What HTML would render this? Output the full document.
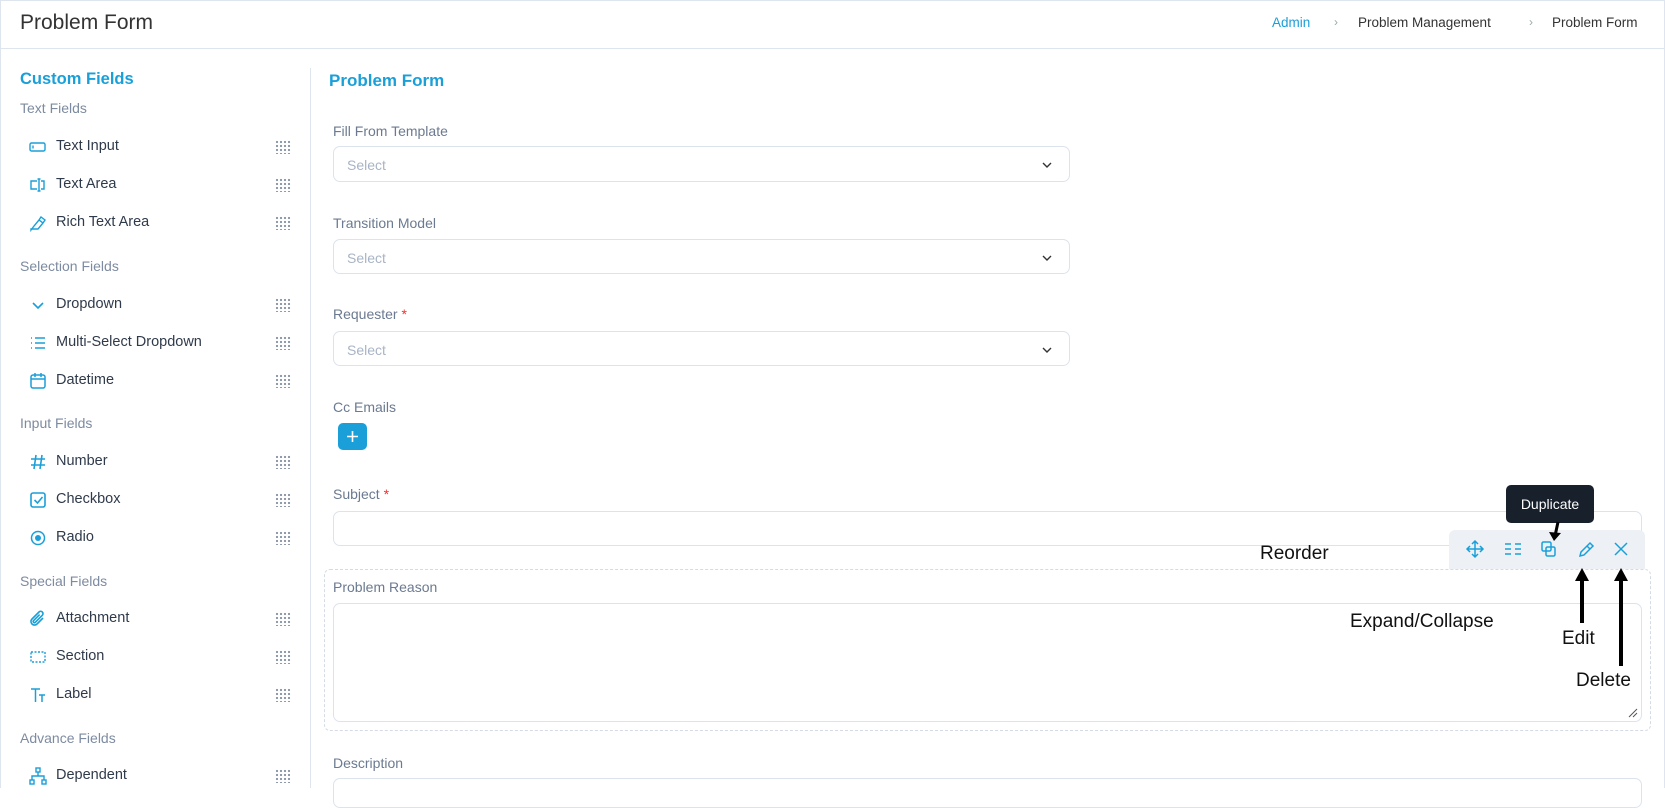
<!DOCTYPE html>
<html><head><meta charset="utf-8"><style>
*{box-sizing:border-box;margin:0;padding:0}
body{width:1665px;height:785px;overflow:hidden;background:#fff;font-family:"Liberation Sans",sans-serif;position:relative;color:#2f3a4a}
.a{position:absolute;white-space:nowrap}
.lbl{font-size:14px;color:#6b7a90}
.sec{font-size:14px;color:#7d8ba0;left:20px}
.item{left:56px;font-size:14.5px;color:#2f3a4a}
.ic{left:28px;width:20px;height:20px}
.grip{left:275px;width:16px;height:14px;background-image:radial-gradient(circle,#8a96a8 1px,transparent 1.3px);background-size:4px 4px}
.box{position:absolute;border:1px solid #dde3ec;border-radius:7px;background:#fff}
.sel{font-size:14px;color:#a8b4c6;padding:10px 13px}
.chev{position:absolute;right:16px;top:12px}
.ann{position:absolute;font-size:19px;color:#111;white-space:nowrap}
.arrow{position:absolute;width:4px;background:#000}
</style></head><body>
<div class="a" style="left:0;top:0;width:1665px;height:49px;border:1px solid #dfe5ee"></div>
<div class="a" style="left:20px;top:11px;font-size:21px;color:#333">Problem Form</div>
<div class="a" style="left:1272px;top:15px;font-size:13.5px;color:#1a9fd9">Admin</div>
<div class="a" style="left:1334px;top:15px;font-size:12px;color:#9aa">›</div>
<div class="a" style="left:1358px;top:15px;font-size:13.5px;color:#333">Problem Management</div>
<div class="a" style="left:1529px;top:15px;font-size:12px;color:#9aa">›</div>
<div class="a" style="left:1552px;top:15px;font-size:13.5px;color:#333">Problem Form</div>
<div class="a" style="left:0;top:48px;width:1px;height:740px;background:#dfe5ee"></div>
<div class="a" style="left:1664px;top:48px;width:1px;height:740px;background:#dfe5ee"></div>
<div class="a" style="left:310px;top:68px;width:1px;height:720px;background:#dfe5ee"></div>

<div class="a" style="left:20px;top:70px;font-size:16.5px;color:#1a9fd9;font-weight:bold">Custom Fields</div>
<div class="a sec" style="top:100px">Text Fields</div>
<div class="a sec" style="top:258px">Selection Fields</div>
<div class="a sec" style="top:415px">Input Fields</div>
<div class="a sec" style="top:573px">Special Fields</div>
<div class="a sec" style="top:730px">Advance Fields</div>

<svg class="a ic" style="top:137px" viewBox="0 0 20 20" fill="none" stroke="#1a9fd9" stroke-width="1.4"><rect x="2" y="6" width="15" height="8" rx="1.5"/><path d="M5 8.5v3"/></svg>
<div class="a item" style="top:138px">Text Input</div><div class="a grip" style="top:140px"></div>
<svg class="a ic" style="top:175px" viewBox="0 0 20 20" fill="none" stroke="#1a9fd9" stroke-width="1.4"><path d="M9 6H3v8h6M13 6h3v8h-3M11 4v12M9.5 4h3M9.5 16h3"/></svg>
<div class="a item" style="top:176px">Text Area</div><div class="a grip" style="top:178px"></div>
<svg class="a ic" style="top:213px" viewBox="0 0 20 20" fill="none" stroke="#1a9fd9" stroke-width="1.4"><path d="M3 17l3-4 5-6 4 3-5 6H3zM11 7l2-3 4 3-2 3"/></svg>
<div class="a item" style="top:214px">Rich Text Area</div><div class="a grip" style="top:216px"></div>

<svg class="a ic" style="top:295px" viewBox="0 0 20 20" fill="none" stroke="#1a9fd9" stroke-width="1.6"><path d="M5 8l5 5 5-5"/></svg>
<div class="a item" style="top:296px">Dropdown</div><div class="a grip" style="top:298px"></div>
<svg class="a ic" style="top:333px" viewBox="0 0 20 20" fill="none" stroke="#1a9fd9" stroke-width="1.6"><path d="M3 5h1M3 10h1M3 15h1M7 5h10M7 10h10M7 15h10"/></svg>
<div class="a item" style="top:334px">Multi-Select Dropdown</div><div class="a grip" style="top:336px"></div>
<svg class="a ic" style="top:371px" viewBox="0 0 20 20" fill="none" stroke="#1a9fd9" stroke-width="1.5"><rect x="3" y="4" width="14" height="13" rx="2"/><path d="M3 8h14M7 2v4M13 2v4"/></svg>
<div class="a item" style="top:372px">Datetime</div><div class="a grip" style="top:374px"></div>

<svg class="a ic" style="top:452px" viewBox="0 0 20 20" fill="none" stroke="#1a9fd9" stroke-width="1.6"><path d="M8 3L6 17M14 3l-2 14M3 7h14M3 13h14"/></svg>
<div class="a item" style="top:453px">Number</div><div class="a grip" style="top:455px"></div>
<svg class="a ic" style="top:490px" viewBox="0 0 20 20" fill="none" stroke="#1a9fd9" stroke-width="1.6"><rect x="3" y="3" width="14" height="14" rx="2"/><path d="M6.5 10l3 3 5-6"/></svg>
<div class="a item" style="top:491px">Checkbox</div><div class="a grip" style="top:493px"></div>
<svg class="a ic" style="top:528px" viewBox="0 0 20 20"><circle cx="10" cy="10" r="6.5" fill="none" stroke="#1a9fd9" stroke-width="1.5"/><circle cx="10" cy="10" r="3" fill="#1a9fd9"/></svg>
<div class="a item" style="top:529px">Radio</div><div class="a grip" style="top:531px"></div>

<svg class="a ic" style="top:609px" viewBox="0 0 20 20" fill="none" stroke="#1a9fd9" stroke-width="1.6"><path d="M15 9l-6 6a3.5 3.5 0 01-5-5l7-7a2.3 2.3 0 013.3 3.3l-7 7a1.2 1.2 0 01-1.7-1.7l6-6"/></svg>
<div class="a item" style="top:610px">Attachment</div><div class="a grip" style="top:612px"></div>
<svg class="a ic" style="top:647px" viewBox="0 0 20 20" fill="none" stroke="#1a9fd9" stroke-width="1.4" stroke-dasharray="2 1.5"><rect x="3" y="5" width="14" height="10"/></svg>
<div class="a item" style="top:648px">Section</div><div class="a grip" style="top:650px"></div>
<svg class="a ic" style="top:685px" viewBox="0 0 20 20" fill="none" stroke="#1a9fd9" stroke-width="1.5"><path d="M3 4h9M7.5 4v13M11 10h6M14 10v7"/></svg>
<div class="a item" style="top:686px">Label</div><div class="a grip" style="top:688px"></div>
<svg class="a ic" style="top:766px" viewBox="0 0 20 20" fill="none" stroke="#1a9fd9" stroke-width="1.4"><rect x="8" y="2" width="4" height="4"/><rect x="2" y="14" width="4" height="4"/><rect x="14" y="14" width="4" height="4"/><path d="M10 6v4M4 14v-4h12v4"/></svg>
<div class="a item" style="top:767px">Dependent</div><div class="a grip" style="top:769px"></div>

<div class="a" style="left:329px;top:71px;font-size:17px;color:#1a9fd9;font-weight:bold">Problem Form</div>

<div class="a lbl" style="left:333px;top:123px">Fill From Template</div>
<div class="box sel" style="left:333px;top:146px;width:737px;height:36px">Select<svg class="chev" width="12" height="12" viewBox="0 0 12 12" fill="none" stroke="#333" stroke-width="1.4"><path d="M2 4l4 4 4-4"/></svg></div>
<div class="a lbl" style="left:333px;top:215px">Transition Model</div>
<div class="box sel" style="left:333px;top:239px;width:737px;height:35px">Select<svg class="chev" width="12" height="12" viewBox="0 0 12 12" fill="none" stroke="#333" stroke-width="1.4"><path d="M2 4l4 4 4-4"/></svg></div>
<div class="a lbl" style="left:333px;top:306px">Requester <span style="color:#e33">*</span></div>
<div class="box sel" style="left:333px;top:331px;width:737px;height:35px">Select<svg class="chev" width="12" height="12" viewBox="0 0 12 12" fill="none" stroke="#333" stroke-width="1.4"><path d="M2 4l4 4 4-4"/></svg></div>
<div class="a lbl" style="left:333px;top:399px">Cc Emails</div>
<div class="a" style="left:338px;top:423px;width:29px;height:27px;background:#1a9fd9;border-radius:5px"><svg width="29" height="27" viewBox="0 0 29 27" stroke="#fff" stroke-width="1.6"><path d="M14.5 8v11M9 13.5h11"/></svg></div>
<div class="a lbl" style="left:333px;top:486px">Subject <span style="color:#e33">*</span></div>
<div class="box" style="left:333px;top:511px;width:1309px;height:35px"></div>

<div class="a" style="left:324px;top:569px;width:1327px;height:162px;border:1px dashed #d5dbe4;border-radius:6px"></div>
<div class="a lbl" style="left:333px;top:579px">Problem Reason</div>
<div class="box" style="left:333px;top:603px;width:1309px;height:119px"></div>
<svg class="a" style="left:1628px;top:708px" width="10" height="10" stroke="#555" stroke-width="1"><path d="M1 9L9 1M5 9l4-4"/></svg>
<div class="a lbl" style="left:333px;top:755px">Description</div>
<div class="box" style="left:333px;top:778px;width:1309px;height:30px"></div>

<div class="a" style="left:1449px;top:530px;width:196px;height:39px;background:#edf1f6;border-radius:6px 6px 0 0"></div>
<svg class="a" style="left:1449px;top:530px" width="196" height="39" fill="none" stroke="#1a9fd9" stroke-width="1.5">
<path d="M26 11v16M18 19h16M23 14l3-3 3 3M23 24l3 3 3-3M21 16l-3 3 3 3M31 16l3 3-3 3"/>
<path d="M56 14h6M56 19h6M56 24h6M66 14h6M66 19h6M66 24h6"/>
<rect x="93" y="12" width="9" height="9" rx="1.5"/><rect x="97" y="17" width="9" height="9" rx="1.5"/>
<path d="M131 26l1-4 9-9 3 3-9 9zM138 16l3 3"/>
<path d="M166 13l12 12M178 13l-12 12"/></svg>
<div class="a" style="left:1506px;top:485px;width:88px;height:38px;background:#17202b;border-radius:5px;color:#fff;font-size:14px;text-align:center;line-height:38px">Duplicate</div>
<svg class="a" style="left:1540px;top:520px" width="30" height="25"><path d="M18 2L15 16" stroke="#000" stroke-width="3"/><path d="M9 12l5 9 7-8z" fill="#000"/></svg>

<div class="ann" style="left:1260px;top:543px">Reorder</div>
<div class="ann" style="left:1350px;top:611px">Expand/Collapse</div>
<div class="ann" style="left:1562px;top:628px">Edit</div>
<div class="ann" style="left:1576px;top:670px">Delete</div>
<div class="arrow" style="left:1580px;top:578px;height:45px"></div>
<svg class="a" style="left:1574px;top:568px" width="16" height="14"><path d="M8 0L1 13h14z" fill="#000"/></svg>
<div class="arrow" style="left:1619px;top:578px;height:88px"></div>
<svg class="a" style="left:1613px;top:568px" width="16" height="14"><path d="M8 0L1 13h14z" fill="#000"/></svg>
</body></html>
